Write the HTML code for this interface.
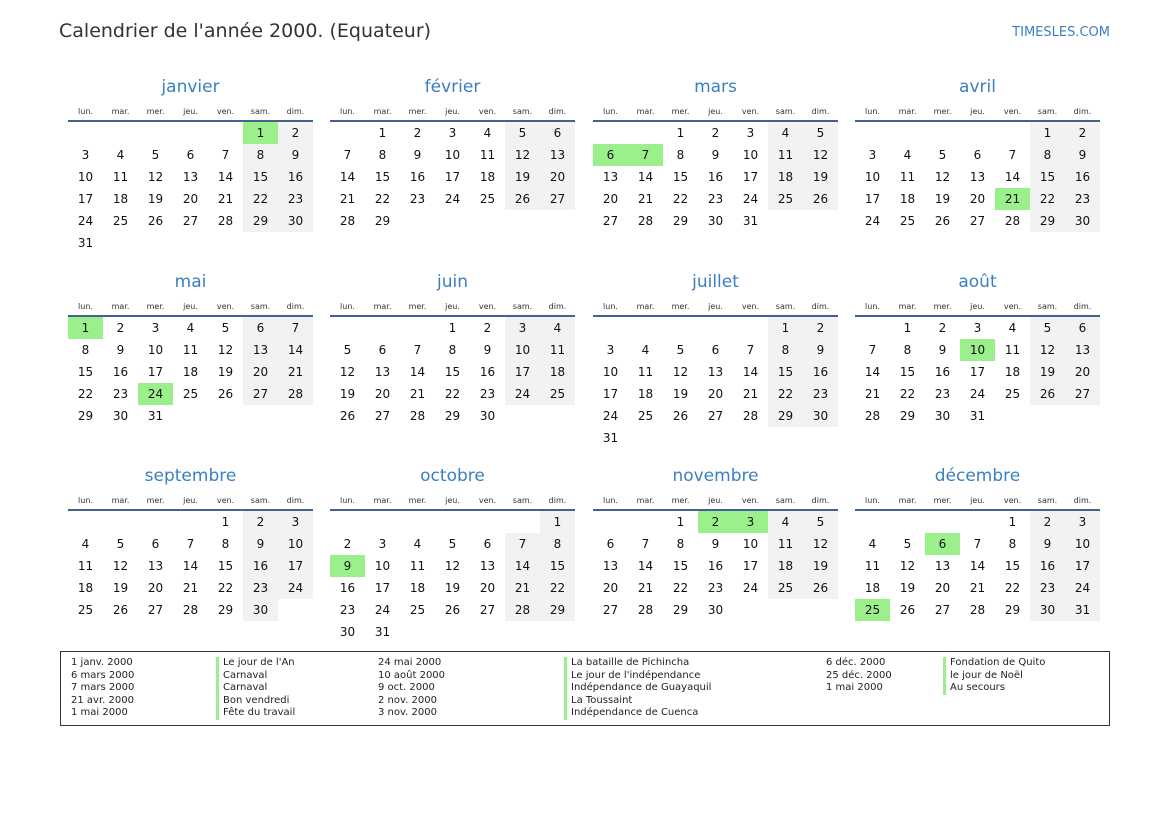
<!DOCTYPE html>
<html><head><meta charset="utf-8"><style>
body{margin:0;width:1169px;height:827px;background:#fff;position:relative;font-family:"DejaVu Sans","Liberation Sans",sans-serif;color:#111;overflow:hidden}
.t{position:absolute;left:59px;top:20px;font-size:19px;color:#333}
.s{position:absolute;right:59px;top:25px;font-size:13px;color:#3a7fc0}
.m{position:absolute;width:245px}
.m h2{margin:0 0 4px 0;height:24px;line-height:24px;text-align:center;font-weight:normal;font-size:17px;color:#3a7fc0}
table{border-collapse:collapse;table-layout:fixed;width:245px}
th{height:17px;font-weight:normal;font-size:8px;color:#333;border-bottom:2px solid #44628f;padding:0;vertical-align:middle}
td{height:22px;padding:0;text-align:center;font-size:12px;width:35px}
td.w{background:#f2f2f2}
td.h{background:#9cf08c}
.lg{position:absolute;left:60px;top:651px;width:1048px;height:73px;border:1.5px solid #333;font-size:10px;color:#222}
.c{position:absolute;top:5px;line-height:12.5px;white-space:nowrap}
.b{border-left:3px solid #9cf08c;padding-left:4px}
</style></head><body>
<div class="t">Calendrier de l'année 2000. (Equateur)</div>
<div class="s">TIMESLES.COM</div>

<div class="m" style="left:68px;top:75px"><h2>janvier</h2><table><tr><th>lun.</th><th>mar.</th><th>mer.</th><th>jeu.</th><th>ven.</th><th>sam.</th><th>dim.</th></tr>
<tr><td></td><td></td><td></td><td></td><td></td><td class="h">1</td><td class="w">2</td></tr>
<tr><td>3</td><td>4</td><td>5</td><td>6</td><td>7</td><td class="w">8</td><td class="w">9</td></tr>
<tr><td>10</td><td>11</td><td>12</td><td>13</td><td>14</td><td class="w">15</td><td class="w">16</td></tr>
<tr><td>17</td><td>18</td><td>19</td><td>20</td><td>21</td><td class="w">22</td><td class="w">23</td></tr>
<tr><td>24</td><td>25</td><td>26</td><td>27</td><td>28</td><td class="w">29</td><td class="w">30</td></tr>
<tr><td>31</td><td></td><td></td><td></td><td></td><td></td><td></td></tr></table></div>

<div class="m" style="left:330px;top:75px"><h2>février</h2><table><tr><th>lun.</th><th>mar.</th><th>mer.</th><th>jeu.</th><th>ven.</th><th>sam.</th><th>dim.</th></tr>
<tr><td></td><td>1</td><td>2</td><td>3</td><td>4</td><td class="w">5</td><td class="w">6</td></tr>
<tr><td>7</td><td>8</td><td>9</td><td>10</td><td>11</td><td class="w">12</td><td class="w">13</td></tr>
<tr><td>14</td><td>15</td><td>16</td><td>17</td><td>18</td><td class="w">19</td><td class="w">20</td></tr>
<tr><td>21</td><td>22</td><td>23</td><td>24</td><td>25</td><td class="w">26</td><td class="w">27</td></tr>
<tr><td>28</td><td>29</td><td></td><td></td><td></td><td></td><td></td></tr></table></div>

<div class="m" style="left:593px;top:75px"><h2>mars</h2><table><tr><th>lun.</th><th>mar.</th><th>mer.</th><th>jeu.</th><th>ven.</th><th>sam.</th><th>dim.</th></tr>
<tr><td></td><td></td><td>1</td><td>2</td><td>3</td><td class="w">4</td><td class="w">5</td></tr>
<tr><td class="h">6</td><td class="h">7</td><td>8</td><td>9</td><td>10</td><td class="w">11</td><td class="w">12</td></tr>
<tr><td>13</td><td>14</td><td>15</td><td>16</td><td>17</td><td class="w">18</td><td class="w">19</td></tr>
<tr><td>20</td><td>21</td><td>22</td><td>23</td><td>24</td><td class="w">25</td><td class="w">26</td></tr>
<tr><td>27</td><td>28</td><td>29</td><td>30</td><td>31</td><td></td><td></td></tr></table></div>

<div class="m" style="left:855px;top:75px"><h2>avril</h2><table><tr><th>lun.</th><th>mar.</th><th>mer.</th><th>jeu.</th><th>ven.</th><th>sam.</th><th>dim.</th></tr>
<tr><td></td><td></td><td></td><td></td><td></td><td class="w">1</td><td class="w">2</td></tr>
<tr><td>3</td><td>4</td><td>5</td><td>6</td><td>7</td><td class="w">8</td><td class="w">9</td></tr>
<tr><td>10</td><td>11</td><td>12</td><td>13</td><td>14</td><td class="w">15</td><td class="w">16</td></tr>
<tr><td>17</td><td>18</td><td>19</td><td>20</td><td class="h">21</td><td class="w">22</td><td class="w">23</td></tr>
<tr><td>24</td><td>25</td><td>26</td><td>27</td><td>28</td><td class="w">29</td><td class="w">30</td></tr></table></div>

<div class="m" style="left:68px;top:270px"><h2>mai</h2><table><tr><th>lun.</th><th>mar.</th><th>mer.</th><th>jeu.</th><th>ven.</th><th>sam.</th><th>dim.</th></tr>
<tr><td class="h">1</td><td>2</td><td>3</td><td>4</td><td>5</td><td class="w">6</td><td class="w">7</td></tr>
<tr><td>8</td><td>9</td><td>10</td><td>11</td><td>12</td><td class="w">13</td><td class="w">14</td></tr>
<tr><td>15</td><td>16</td><td>17</td><td>18</td><td>19</td><td class="w">20</td><td class="w">21</td></tr>
<tr><td>22</td><td>23</td><td class="h">24</td><td>25</td><td>26</td><td class="w">27</td><td class="w">28</td></tr>
<tr><td>29</td><td>30</td><td>31</td><td></td><td></td><td></td><td></td></tr></table></div>

<div class="m" style="left:330px;top:270px"><h2>juin</h2><table><tr><th>lun.</th><th>mar.</th><th>mer.</th><th>jeu.</th><th>ven.</th><th>sam.</th><th>dim.</th></tr>
<tr><td></td><td></td><td></td><td>1</td><td>2</td><td class="w">3</td><td class="w">4</td></tr>
<tr><td>5</td><td>6</td><td>7</td><td>8</td><td>9</td><td class="w">10</td><td class="w">11</td></tr>
<tr><td>12</td><td>13</td><td>14</td><td>15</td><td>16</td><td class="w">17</td><td class="w">18</td></tr>
<tr><td>19</td><td>20</td><td>21</td><td>22</td><td>23</td><td class="w">24</td><td class="w">25</td></tr>
<tr><td>26</td><td>27</td><td>28</td><td>29</td><td>30</td><td></td><td></td></tr></table></div>

<div class="m" style="left:593px;top:270px"><h2>juillet</h2><table><tr><th>lun.</th><th>mar.</th><th>mer.</th><th>jeu.</th><th>ven.</th><th>sam.</th><th>dim.</th></tr>
<tr><td></td><td></td><td></td><td></td><td></td><td class="w">1</td><td class="w">2</td></tr>
<tr><td>3</td><td>4</td><td>5</td><td>6</td><td>7</td><td class="w">8</td><td class="w">9</td></tr>
<tr><td>10</td><td>11</td><td>12</td><td>13</td><td>14</td><td class="w">15</td><td class="w">16</td></tr>
<tr><td>17</td><td>18</td><td>19</td><td>20</td><td>21</td><td class="w">22</td><td class="w">23</td></tr>
<tr><td>24</td><td>25</td><td>26</td><td>27</td><td>28</td><td class="w">29</td><td class="w">30</td></tr>
<tr><td>31</td><td></td><td></td><td></td><td></td><td></td><td></td></tr></table></div>

<div class="m" style="left:855px;top:270px"><h2>août</h2><table><tr><th>lun.</th><th>mar.</th><th>mer.</th><th>jeu.</th><th>ven.</th><th>sam.</th><th>dim.</th></tr>
<tr><td></td><td>1</td><td>2</td><td>3</td><td>4</td><td class="w">5</td><td class="w">6</td></tr>
<tr><td>7</td><td>8</td><td>9</td><td class="h">10</td><td>11</td><td class="w">12</td><td class="w">13</td></tr>
<tr><td>14</td><td>15</td><td>16</td><td>17</td><td>18</td><td class="w">19</td><td class="w">20</td></tr>
<tr><td>21</td><td>22</td><td>23</td><td>24</td><td>25</td><td class="w">26</td><td class="w">27</td></tr>
<tr><td>28</td><td>29</td><td>30</td><td>31</td><td></td><td></td><td></td></tr></table></div>

<div class="m" style="left:68px;top:464px"><h2>septembre</h2><table><tr><th>lun.</th><th>mar.</th><th>mer.</th><th>jeu.</th><th>ven.</th><th>sam.</th><th>dim.</th></tr>
<tr><td></td><td></td><td></td><td></td><td>1</td><td class="w">2</td><td class="w">3</td></tr>
<tr><td>4</td><td>5</td><td>6</td><td>7</td><td>8</td><td class="w">9</td><td class="w">10</td></tr>
<tr><td>11</td><td>12</td><td>13</td><td>14</td><td>15</td><td class="w">16</td><td class="w">17</td></tr>
<tr><td>18</td><td>19</td><td>20</td><td>21</td><td>22</td><td class="w">23</td><td class="w">24</td></tr>
<tr><td>25</td><td>26</td><td>27</td><td>28</td><td>29</td><td class="w">30</td><td></td></tr></table></div>

<div class="m" style="left:330px;top:464px"><h2>octobre</h2><table><tr><th>lun.</th><th>mar.</th><th>mer.</th><th>jeu.</th><th>ven.</th><th>sam.</th><th>dim.</th></tr>
<tr><td></td><td></td><td></td><td></td><td></td><td></td><td class="w">1</td></tr>
<tr><td>2</td><td>3</td><td>4</td><td>5</td><td>6</td><td class="w">7</td><td class="w">8</td></tr>
<tr><td class="h">9</td><td>10</td><td>11</td><td>12</td><td>13</td><td class="w">14</td><td class="w">15</td></tr>
<tr><td>16</td><td>17</td><td>18</td><td>19</td><td>20</td><td class="w">21</td><td class="w">22</td></tr>
<tr><td>23</td><td>24</td><td>25</td><td>26</td><td>27</td><td class="w">28</td><td class="w">29</td></tr>
<tr><td>30</td><td>31</td><td></td><td></td><td></td><td></td><td></td></tr></table></div>

<div class="m" style="left:593px;top:464px"><h2>novembre</h2><table><tr><th>lun.</th><th>mar.</th><th>mer.</th><th>jeu.</th><th>ven.</th><th>sam.</th><th>dim.</th></tr>
<tr><td></td><td></td><td>1</td><td class="h">2</td><td class="h">3</td><td class="w">4</td><td class="w">5</td></tr>
<tr><td>6</td><td>7</td><td>8</td><td>9</td><td>10</td><td class="w">11</td><td class="w">12</td></tr>
<tr><td>13</td><td>14</td><td>15</td><td>16</td><td>17</td><td class="w">18</td><td class="w">19</td></tr>
<tr><td>20</td><td>21</td><td>22</td><td>23</td><td>24</td><td class="w">25</td><td class="w">26</td></tr>
<tr><td>27</td><td>28</td><td>29</td><td>30</td><td></td><td></td><td></td></tr></table></div>

<div class="m" style="left:855px;top:464px"><h2>décembre</h2><table><tr><th>lun.</th><th>mar.</th><th>mer.</th><th>jeu.</th><th>ven.</th><th>sam.</th><th>dim.</th></tr>
<tr><td></td><td></td><td></td><td></td><td>1</td><td class="w">2</td><td class="w">3</td></tr>
<tr><td>4</td><td>5</td><td class="h">6</td><td>7</td><td>8</td><td class="w">9</td><td class="w">10</td></tr>
<tr><td>11</td><td>12</td><td>13</td><td>14</td><td>15</td><td class="w">16</td><td class="w">17</td></tr>
<tr><td>18</td><td>19</td><td>20</td><td>21</td><td>22</td><td class="w">23</td><td class="w">24</td></tr>
<tr><td class="h">25</td><td>26</td><td>27</td><td>28</td><td>29</td><td class="w">30</td><td class="w">31</td></tr></table></div>

<div class="lg">
<div class="c" style="left:10px">1 janv. 2000<br>6 mars 2000<br>7 mars 2000<br>21 avr. 2000<br>1 mai 2000</div>
<div class="c b" style="left:155px">Le jour de l'An<br>Carnaval<br>Carnaval<br>Bon vendredi<br>Fête du travail</div>
<div class="c" style="left:317px">24 mai 2000<br>10 août 2000<br>9 oct. 2000<br>2 nov. 2000<br>3 nov. 2000</div>
<div class="c b" style="left:503px">La bataille de Pichincha<br>Le jour de l'indépendance<br>Indépendance de Guayaquil<br>La Toussaint<br>Indépendance de Cuenca</div>
<div class="c" style="left:765px">6 déc. 2000<br>25 déc. 2000<br>1 mai 2000</div>
<div class="c b" style="left:882px">Fondation de Quito<br>le jour de Noël<br>Au secours</div>
</div>
</body></html>
